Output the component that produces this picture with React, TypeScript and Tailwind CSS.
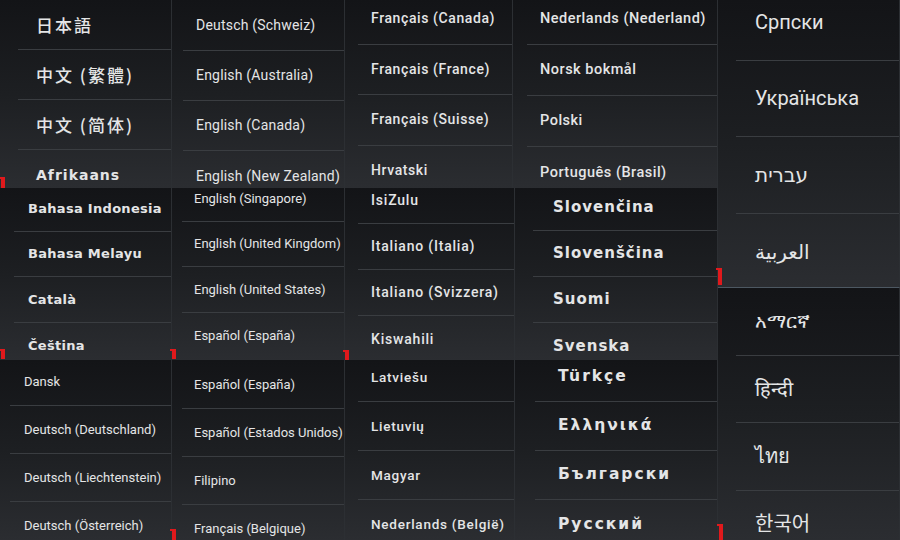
type Item = { t: string; c?: string };

type TileProps = {
  w: string;
  h: string;
  top: string;
  rowH: string;
  ml: string;
  pl: string;
  font: string;
  items: Item[];
  extra?: string;
};

const cjk = "font-['Noto_Sans_CJK_SC',sans-serif] font-medium text-[17px] tracking-[2px]";

function Tile({ w, h, top, rowH, ml, pl, font, items, extra = '' }: TileProps) {
  return (
    <div className={`${w} ${h} overflow-hidden bg-linear-to-b from-[#131417] via-[#1d1f22] to-[#2b2d31] border-r border-[#2c2f33] ${extra}`}>
      <div className={`${top} flex flex-col`}>
        {items.map((it, i) => (
          <div
            key={i}
            className={`${rowH} ${ml} shrink-0 flex items-center border-b border-[#3a3d41] last:border-b-0`}
          >
            <span className={`${pl} whitespace-nowrap text-[#e4e5e6] ${it.c ?? font}`}>{it.t}</span>
          </div>
        ))}
      </div>
    </div>
  );
}

const L = (...ts: string[]): Item[] => ts.map((t) => ({ t }));

// little red corner ticks left on the screenshots
function Tick({ cls }: { cls: string }) {
  return (
    <span className={`absolute w-[4px] bg-[#e0191c] ${cls}`}>
      <span className="absolute -left-[2px] top-0 w-[2px] h-[2px] bg-[#e0191c]" />
    </span>
  );
}

export default function App() {
  const roboto = "font-['Roboto',sans-serif]";
  const dejavu = "font-['DejaVu_Sans',sans-serif]";

  return (
    <div className="relative w-[900px] h-[540px] flex overflow-hidden bg-[#18191c]">
      <div className="w-[718px] flex flex-col">
        {/* row A */}
        <div className="h-[188px] flex">
          <Tile
            w="w-[172px]" h="h-[188px]" top="mt-0" rowH="h-[50px]" ml="ml-[18px]" pl="pl-[18px]"
            font={`${dejavu} font-bold text-[14px] tracking-[1px]`}
            items={[
              { t: '日本語', c: cjk },
              { t: '中文 (繁體)', c: cjk },
              { t: '中文 (简体)', c: cjk },
              { t: 'Afrikaans' },
            ]}
          />
          <Tile
            w="w-[173px]" h="h-[188px]" top="mt-[1px]" rowH="h-[50px]" ml="ml-[11px]" pl="pl-[13px]"
            font={`${roboto} text-[14px] tracking-[0.2px]`}
            items={L('Deutsch (Schweiz)', 'English (Australia)', 'English (Canada)', 'English (New Zealand)')}
          />
          <Tile
            w="w-[168px]" h="h-[188px]" top="-mt-[6px]" rowH="h-[50.5px]" ml="ml-[13px]" pl="pl-[13px]"
            font={`${roboto} font-medium text-[14px] tracking-[0.6px]`}
            items={L('Français (Canada)', 'Français (France)', 'Français (Suisse)', 'Hrvatski')}
          />
          <Tile
            w="w-[205px]" h="h-[188px]" top="-mt-[6px]" rowH="h-[51px]" ml="ml-[14px]" pl="pl-[13px]"
            font={`${roboto} font-medium text-[14.5px] tracking-[0.5px]`}
            items={L('Nederlands (Nederland)', 'Norsk bokmål', 'Polski', 'Português (Brasil)')}
          />
        </div>

        {/* row B */}
        <div className="h-[172px] flex">
          <Tile
            w="w-[172px]" h="h-[172px]" top="-mt-[2px]" rowH="h-[45.5px]" ml="ml-[14px]" pl="pl-[14px]"
            font={`${dejavu} font-bold text-[13px] tracking-[0.3px]`}
            items={L('Bahasa Indonesia', 'Bahasa Melayu', 'Català', 'Čeština')}
          />
          <Tile
            w="w-[173px]" h="h-[172px]" top="-mt-[12px]" rowH="h-[45.5px]" ml="ml-[10px]" pl="pl-[12px]"
            font={`${roboto} text-[13px]`}
            items={L('English (Singapore)', 'English (United Kingdom)', 'English (United States)', 'Español (España)')}
          />
          <Tile
            w="w-[170px]" h="h-[172px]" top="-mt-[10px]" rowH="h-[46px]" ml="ml-[13px]" pl="pl-[13px]"
            font={`${roboto} font-medium text-[14px] tracking-[0.8px]`}
            items={L('IsiZulu', 'Italiano (Italia)', 'Italiano (Svizzera)', 'Kiswahili')}
          />
          <Tile
            w="w-[203px]" h="h-[172px]" top="-mt-[3px]" rowH="h-[46px]" ml="ml-[18px]" pl="pl-[20px]"
            font={`${dejavu} font-bold text-[15px] tracking-[1px]`}
            items={L('Slovenčina', 'Slovenščina', 'Suomi', 'Svenska')}
          />
        </div>

        {/* row C */}
        <div className="h-[180px] flex">
          <Tile
            w="w-[172px]" h="h-[180px]" top="-mt-[2px]" rowH="h-[48px]" ml="ml-[10px]" pl="pl-[14px]"
            font={`${roboto} text-[13px]`}
            items={L('Dansk', 'Deutsch (Deutschland)', 'Deutsch (Liechtenstein)', 'Deutsch (Österreich)')}
          />
          <Tile
            w="w-[173px]" h="h-[180px]" top="mt-[1px]" rowH="h-[48px]" ml="ml-[10px]" pl="pl-[12px]"
            font={`${roboto} text-[13px]`}
            items={L('Español (España)', 'Español (Estados Unidos)', 'Filipino', 'Français (Belgique)')}
          />
          <Tile
            w="w-[170px]" h="h-[180px]" top="-mt-[7px]" rowH="h-[49px]" ml="ml-[13px]" pl="pl-[13px]"
            font={`${roboto} font-medium text-[13.5px] tracking-[0.75px]`}
            items={L('Latviešu', 'Lietuvių', 'Magyar', 'Nederlands (België)')}
          />
          <Tile
            w="w-[203px]" h="h-[180px]" top="-mt-[7px]" rowH="h-[49px]" ml="ml-[20px]" pl="pl-[23px]"
            font={`${dejavu} font-bold text-[15.5px] tracking-[2px]`}
            items={L('Türkçe', 'Ελληνικά', 'Български', 'Русский')}
          />
        </div>
      </div>

      {/* right column */}
      <div className="w-[182px] flex flex-col">
        <Tile
          w="w-[182px]" h="h-[288px]" top="-mt-[16px]" rowH="h-[76.5px]" ml="ml-[18px]" pl="pl-[19px]"
          font="font-['Roboto','DejaVu_Sans',sans-serif] text-[20px]"
          extra="border-b border-b-[#4d5862]"
          items={L('Српски', 'Українська', 'עברית', 'العربية')}
        />
        <Tile
          w="w-[182px]" h="h-[252px]" top="mt-0" rowH="h-[67.5px]" ml="ml-[18px]" pl="pl-[19px]"
          font="font-['Roboto','DejaVu_Sans','Noto_Sans_CJK_KR',sans-serif] text-[20px]"
          items={L('አማርኛ', 'हिन्दी', 'ไทย', '한국어')}
        />
      </div>

      <Tick cls="left-[1px] top-[177px] h-[11px]" />
      <Tick cls="left-[1px] top-[349px] h-[10px]" />
      <Tick cls="left-[172px] top-[349px] h-[10px]" />
      <Tick cls="left-[345px] top-[350px] h-[10px]" />
      <Tick cls="left-[172px] top-[529px] h-[11px]" />
      <Tick cls="left-[718px] top-[268px] h-[17px]" />
      <Tick cls="left-[719px] top-[524px] h-[16px]" />
    </div>
  );
}
